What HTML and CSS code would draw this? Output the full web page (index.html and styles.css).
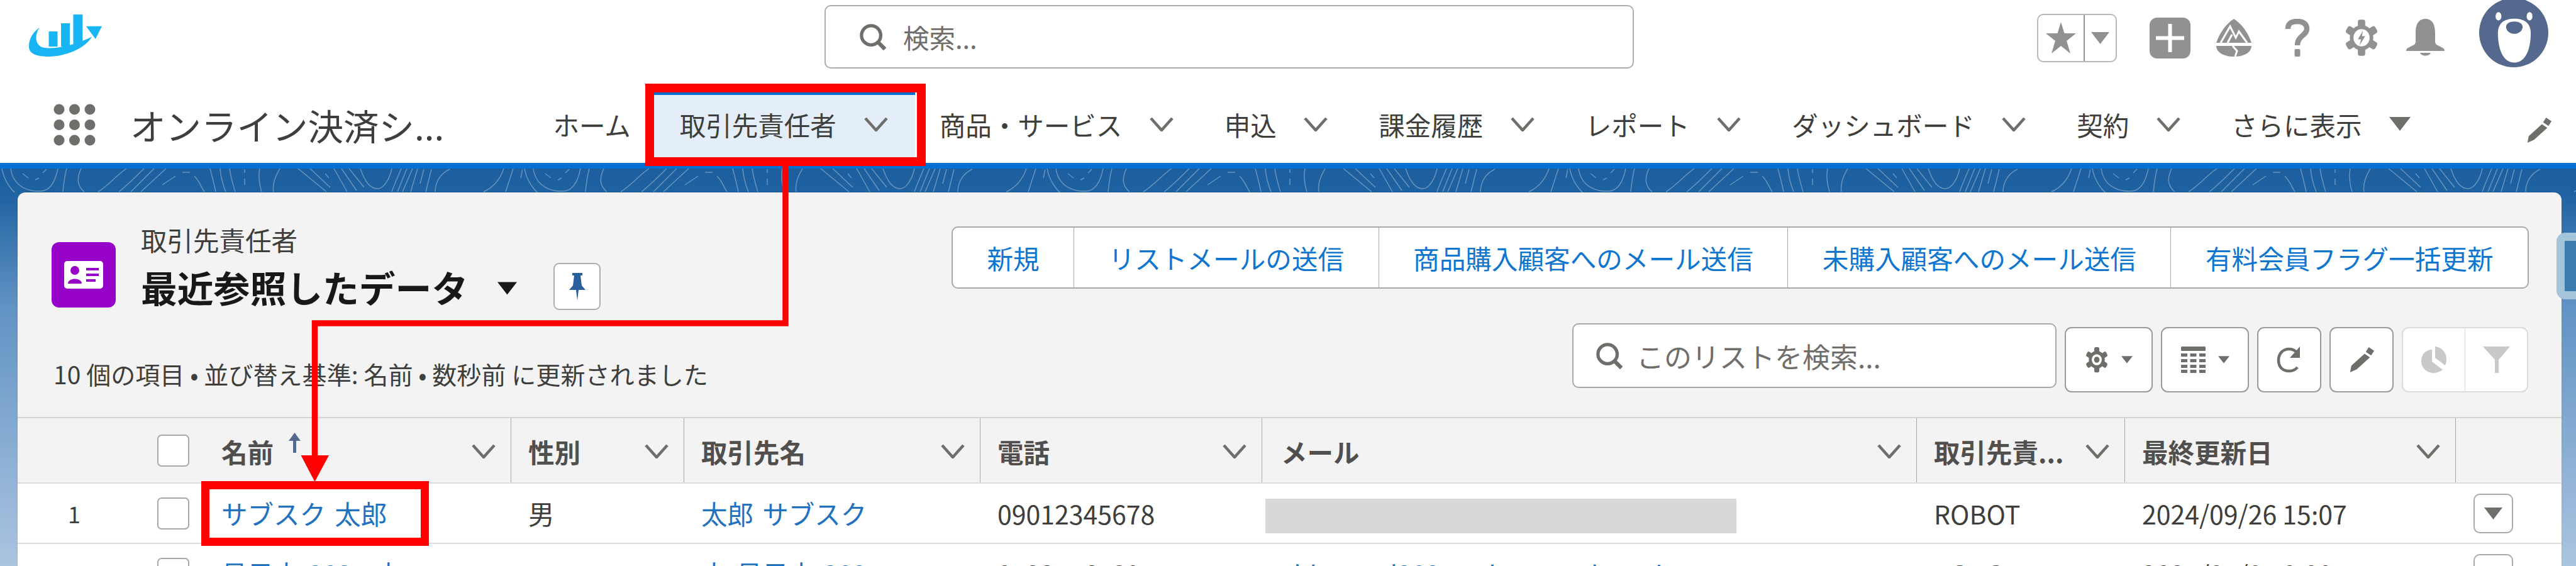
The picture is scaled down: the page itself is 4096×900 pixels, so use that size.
FILE: index.html
```html
<!DOCTYPE html>
<html lang="ja">
<head>
    <meta charset="UTF-8">
    <title>取引先責任者 | Salesforce</title>
    <link rel="stylesheet" href="styles.css">
</head>
<body>
    <!-- Shared icons -->
    <svg class="icon-defs" width="0" height="0">
        <symbol id="chev" viewBox="0 0 38 22"><path d="M2 1 L19 20 L36 1" fill="none" stroke="currentColor" stroke-width="4.5"/></symbol>
        <symbol id="caret" viewBox="0 0 34 22"><path d="M0 0 H34 L17 22 Z" fill="currentColor"/></symbol>
        <symbol id="lens" viewBox="0 0 44 44"><circle cx="19" cy="19" r="16" fill="none" stroke="currentColor" stroke-width="5.5"/><path d="M30 30 L42 42" stroke="currentColor" stroke-width="6.5"/></symbol>
        <symbol id="gear-teeth" viewBox="0 0 48 48">
            <rect x="19" y="1" width="10" height="46" rx="3" fill="currentColor"/>
            <rect x="19" y="1" width="10" height="46" rx="3" fill="currentColor" transform="rotate(60 24 24)"/>
            <rect x="19" y="1" width="10" height="46" rx="3" fill="currentColor" transform="rotate(120 24 24)"/>
            <circle cx="24" cy="24" r="16" fill="currentColor"/>
        </symbol>
    </svg>

    <div class="page">
        <header class="topbar">
            <svg class="logo" viewBox="0 0 125 72">
                <rect x="76" y="0" width="16" height="55" fill="#17b5f4"/>
                <rect x="55" y="15" width="15" height="40" fill="#17b5f4"/>
                <rect x="34" y="29" width="15" height="26" fill="#17b5f4"/>
                <path d="M98 20 H125 L114 42 Z" fill="#17b5f4"/>
                <path d="M0 55 C0 40 8 30 18 22 C10 35 10 50 22 56 C45 62 85 50 108 38 C95 60 60 72 35 72 C15 72 0 68 0 55 Z" fill="#17b5f4"/>
            </svg>
            <div class="global-search">
                <svg class="lens"><use href="#lens"/></svg>
                <span class="placeholder">検索...</span>
            </div>
            <div class="top-icons">
                <div class="fav-btn">
                    <span class="fav-part fav-star">
                        <svg width="48" height="50" viewBox="0 0 48 50"><path d="M24 0 L29.5 18 H48 L33 30 L39 50 L24 38 L9 50 L15 30 L0 18 H18.5 Z" fill="#919191"/></svg>
                    </span>
                    <span class="fav-part">
                        <svg class="caret-fav"><use href="#caret"/></svg>
                    </span>
                </div>
                <span class="top-icon">
                    <svg width="65" height="65" viewBox="0 0 65 65"><rect width="65" height="65" rx="12" fill="#919191"/><path d="M32.5 10 V55 M10 32.5 H55" stroke="#fff" stroke-width="6"/></svg>
                </span>
                <span class="top-icon">
                    <svg width="60" height="60" viewBox="0 0 60 60">
                        <path d="M30 0 C40 6 52 20 58 38 H2 C8 20 20 6 30 0 Z" fill="#919191"/>
                        <path d="M9 38 L24 12 L33 30 L38 20 L51 38 M20 38 L27 25" fill="none" stroke="#fff" stroke-width="3"/>
                        <path d="M2 43 H58 C58 52 48 60 30 60 C12 60 2 52 2 43 Z" fill="#919191"/>
                        <path d="M28 43 L35 51 L32 60" fill="none" stroke="#fff" stroke-width="3"/>
                    </svg>
                </span>
                <span class="top-icon">
                    <svg width="40" height="60" viewBox="0 0 40 60"><path d="M5 16 C5 7 11 4 20 4 C29 4 35 8 35 16 C35 26 20 27 20 42" fill="none" stroke="#919191" stroke-width="8.5"/><rect x="15.5" y="48" width="9" height="12" rx="2" fill="#919191"/></svg>
                </span>
                <span class="top-icon">
                    <svg width="56" height="60" viewBox="0 0 48 48" preserveAspectRatio="none">
                        <use href="#gear-teeth" color="#919191"/>
                        <circle cx="24" cy="24" r="11" fill="#fff"/>
                        <path d="M26 15 L19 26 H23.5 L21 34 L29 22 H24.5 Z" fill="#919191"/>
                    </svg>
                </span>
                <span class="top-icon">
                    <svg width="61" height="60" viewBox="0 0 61 60"><path d="M30.5 0 C42 0 46 10 46 22 V36 C46 41 50 42 54 44 C58 46 61 47 61 51 H0 C0 47 3 46 7 44 C11 42 15 41 15 36 V22 C15 10 19 0 30.5 0 Z" fill="#919191"/><path d="M22 54 H39 C37 60 24 60 22 54 Z" fill="#919191"/></svg>
                </span>
                <svg class="avatar" viewBox="0 0 118 118">
                    <circle cx="59" cy="59" r="59" fill="#54698d"/>
                    <ellipse cx="33" cy="31" rx="5" ry="7" fill="#fff"/>
                    <ellipse cx="86" cy="31" rx="5" ry="7" fill="#fff"/>
                    <path d="M60 35 C78 35 88 43 88 60 C88 85 80 110 60 110 C40 110 32 85 32 60 C32 43 42 35 60 35 Z" fill="#fff"/>
                    <path d="M60 40 C50 40 45 45 46 51 C48 58 54 61 60 61 C66 61 72 58 74 51 C75 45 70 40 60 40 Z" fill="#54698d"/>
                </svg>
            </div>
        </header>

        <nav class="nav">
            <div class="app-block">
                <svg class="launcher" viewBox="0 0 67 67">
                    <circle cx="9" cy="9" r="8.5"/><circle cx="33.5" cy="9" r="8.5"/><circle cx="58" cy="9" r="8.5"/>
                    <circle cx="9" cy="33.5" r="8.5"/><circle cx="33.5" cy="33.5" r="8.5"/><circle cx="58" cy="33.5" r="8.5"/>
                    <circle cx="9" cy="58" r="8.5"/><circle cx="33.5" cy="58" r="8.5"/><circle cx="58" cy="58" r="8.5"/>
                </svg>
                <span class="app-name">オンライン決済シ...</span>
            </div>
            <a class="nav-item nav-home">ホーム</a>
            <a class="nav-item nav-active">取引先責任者<svg class="nav-chev"><use href="#chev"/></svg></a>
            <a class="nav-item">商品・サービス<svg class="nav-chev"><use href="#chev"/></svg></a>
            <a class="nav-item">申込<svg class="nav-chev"><use href="#chev"/></svg></a>
            <a class="nav-item">課金履歴<svg class="nav-chev"><use href="#chev"/></svg></a>
            <a class="nav-item">レポート<svg class="nav-chev"><use href="#chev"/></svg></a>
            <a class="nav-item">ダッシュボード<svg class="nav-chev"><use href="#chev"/></svg></a>
            <a class="nav-item">契約<svg class="nav-chev"><use href="#chev"/></svg></a>
            <a class="nav-item">さらに表示<svg class="nav-more"><use href="#caret"/></svg></a>
            <svg class="nav-edit" viewBox="0 0 44 44"><path d="M34 1 L43 7 L38 15 L29 9 Z M27 12 L36 18 L14 38 L3 43 L5 32 Z" fill="#706e6b"/></svg>
        </nav>

        <main class="main">
            <!-- Contour lines behind the card -->
            <svg class="band" width="4096" height="38">
                <defs>
                    <pattern id="contour" width="831" height="38" patternUnits="userSpaceOnUse">
                        <path fill="none" stroke="#fff" stroke-opacity="0.32" stroke-width="1.5" d="M3 0 C6 18 18 36 30 43 M17 0 C21 30 47 37 65 36 C83 35 89 15 92 0 M36 8 L45 15 M56 18 L62 15 M74 1 L68 7 M106 0 C102 15 101 27 100 37 M129 0 C122 15 122 27 134 37 M201 0 C184 12 172 27 156 37 M229 0 C214 15 202 27 189 37 M245 0 L208 37 M264 0 L224 37 M279 12 L258 26 M290 6 L302 6 M309 12 C318 21 320 30 325 37 M334 0 C338 15 341 27 343 37 M350 0 C351 15 355 27 359 37 M365 0 C367 15 371 27 374 37 M389 1 L389 7 M389 16 L389 26 M413 0 C410 15 413 27 416 37 M445 0 C436 15 433 27 435 37 M474 0 L519 37 M493 0 L525 30 M517 8 L523 15 M531 0 L552 37 M543 0 L567 35 M555 0 L579 30 M573 0 C579 18 588 32 600 32 C611 32 620 15 623 0 M638 0 C632 15 626 27 623 37 M647 0 L632 37 M656 0 L640 37 M664 0 L653 37 M674 1 L668 24 M686 1 L677 37 M715 1 C698 9 692 24 692 37 M801 0 C795 18 784 30 769 37 M816 0 L804 37 M831 1 L828 15"/>
                    </pattern>
                </defs>
                <rect width="4096" height="38" fill="url(#contour)"/>
            </svg>
            <div class="side-tab"></div>

            <section class="card">
                <div class="list-head">
                    <div class="list-title">
                        <svg class="obj-icon" viewBox="0 0 102 104">
                            <rect width="102" height="104" rx="12" fill="#9602c7"/>
                            <rect x="20" y="30" width="62" height="44" rx="5" fill="#fff"/>
                            <circle cx="37" cy="45" r="7" fill="#9602c7"/>
                            <path d="M26 66 C26 56 48 56 48 66 Z" fill="#9602c7"/>
                            <path d="M55 43 H75 M55 52 H75 M55 61 H70" stroke="#9602c7" stroke-width="4"/>
                        </svg>
                        <div>
                            <div class="obj-label">取引先責任者</div>
                            <div class="view-name">
                                <span>最近参照したデータ</span>
                                <svg class="view-caret"><use href="#caret"/></svg>
                                <span class="pin-btn">
                                    <svg width="26" height="44" viewBox="0 0 26 44"><path d="M5 0 H21 V4 H18 L20 20 L26 27 H15 L13 44 L11 27 H0 L6 20 L8 4 H5 Z" fill="#2a5f9e"/></svg>
                                </span>
                            </div>
                        </div>
                    </div>
                    <div class="actions">
                        <a class="action">新規</a>
                        <a class="action">リストメールの送信</a>
                        <a class="action">商品購入顧客へのメール送信</a>
                        <a class="action">未購入顧客へのメール送信</a>
                        <a class="action">有料会員フラグ一括更新</a>
                    </div>
                </div>

                <div class="list-bar">
                    <div class="list-meta">10 個の項目 • 並び替え基準: 名前 • 数秒前 に更新されました</div>
                    <div class="tools">
                        <div class="list-search">
                            <svg class="lens"><use href="#lens"/></svg>
                            <span class="placeholder">このリストを検索...</span>
                        </div>
                        <span class="tool-btn tool-wide">
                            <svg width="38" height="42" viewBox="0 0 48 48" preserveAspectRatio="none">
                                <use href="#gear-teeth" color="#706e6b"/>
                                <circle cx="24" cy="24" r="10" fill="#fff"/>
                                <circle cx="24" cy="24" r="5.5" fill="#706e6b"/>
                            </svg>
                            <svg class="tool-caret"><use href="#caret"/></svg>
                        </span>
                        <span class="tool-btn tool-wide">
                            <svg width="39" height="42" viewBox="0 0 39 42" fill="#706e6b">
                                <rect width="39" height="7" rx="1.5"/>
                                <rect y="11" width="10" height="5"/><rect x="14.5" y="11" width="10" height="5"/><rect x="29" y="11" width="10" height="5"/>
                                <rect y="20" width="10" height="5"/><rect x="14.5" y="20" width="10" height="5"/><rect x="29" y="20" width="10" height="5"/>
                                <rect y="29" width="10" height="5"/><rect x="14.5" y="29" width="10" height="5"/><rect x="29" y="29" width="10" height="5"/>
                                <rect y="37" width="10" height="5"/><rect x="14.5" y="37" width="10" height="5"/><rect x="29" y="37" width="10" height="5"/>
                            </svg>
                            <svg class="tool-caret"><use href="#caret"/></svg>
                        </span>
                        <span class="tool-btn">
                            <svg width="40" height="42" viewBox="0 0 40 42"><path d="M34 12 C30 6 26 4 20 4 C10 4 3 11 3 22 C3 33 10 39 20 39 C26 39 30 37 33 33" fill="none" stroke="#706e6b" stroke-width="4.5"/><path d="M37 0 V18 H21 Z" fill="#706e6b"/></svg>
                        </span>
                        <span class="tool-btn">
                            <svg width="44" height="42" viewBox="0 0 44 44"><path d="M34 1 L43 7 L38 15 L29 9 Z M27 12 L36 18 L14 38 L3 43 L5 32 Z" fill="#706e6b"/></svg>
                        </span>
                        <div class="tool-group">
                            <span class="tool-part tool-part-first">
                                <svg width="40" height="42" viewBox="0 0 40 42"><path d="M17 5 V24 L34 37 C30 40 24 42 19 42 C8 42 0 33 0 23 C0 13 7 5 17 5 Z" fill="#c9c9c9"/><path d="M22 0 C31 1 40 8 40 20 C40 24 39 27 38 30 L22 18 Z" fill="#c9c9c9"/></svg>
                            </span>
                            <span class="tool-part">
                                <svg width="43" height="42" viewBox="0 0 43 42"><path d="M0 0 H43 L25 21 V42 H19 V21 Z" fill="#c9c9c9"/></svg>
                            </span>
                        </div>
                    </div>
                </div>

                <div class="tbl-row tbl-head">
                    <div class="th-plain"></div>
                    <div class="th-plain"><span class="checkbox"></span></div>
                    <div class="th"><span class="th-name">名前<svg class="sort-arrow" width="25" height="32" viewBox="0 0 25 32"><path d="M12.5 0 L22 13 H15 V32 H10 V13 H3 Z" fill="#54698d"/></svg></span><svg class="th-chev"><use href="#chev"/></svg></div>
                    <div class="th">性別<svg class="th-chev"><use href="#chev"/></svg></div>
                    <div class="th">取引先名<svg class="th-chev"><use href="#chev"/></svg></div>
                    <div class="th">電話<svg class="th-chev"><use href="#chev"/></svg></div>
                    <div class="th th-mail">メール<svg class="th-chev"><use href="#chev"/></svg></div>
                    <div class="th">取引先責...<svg class="th-chev"><use href="#chev"/></svg></div>
                    <div class="th">最終更新日<svg class="th-chev"><use href="#chev"/></svg></div>
                    <div class="th-plain"></div>
                </div>

                <div class="tbl-row tbl-data">
                    <div class="td-idx">1</div>
                    <div class="td-check"><span class="checkbox"></span></div>
                    <div class="td"><a class="link">サブスク 太郎</a></div>
                    <div class="td">男</div>
                    <div class="td"><a class="link">太郎 サブスク</a></div>
                    <div class="td td-num">09012345678</div>
                    <div class="td td-mail"><span class="masked"></span></div>
                    <div class="td td-num">ROBOT</div>
                    <div class="td td-num">2024/09/26 15:07</div>
                    <div class="td-act"><span class="row-btn"><svg class="row-caret"><use href="#caret"/></svg></span></div>
                </div>

                <div class="tbl-row tbl-data">
                    <div class="td-idx">2</div>
                    <div class="td-check"><span class="checkbox"></span></div>
                    <div class="td"><a class="link">見目太 2025 太</a></div>
                    <div class="td"></div>
                    <div class="td"><a class="link">太 見目太 2025</a></div>
                    <div class="td td-num">0123456789</div>
                    <div class="td td-num td-mail2"><a class="link">sbl.user.d2025@tk.example.co.jp</a></div>
                    <div class="td td-num">ROBOT</div>
                    <div class="td td-num">2025/01/01 0:00</div>
                    <div class="td-act"><span class="row-btn"><svg class="row-caret"><use href="#caret"/></svg></span></div>
                </div>
            </section>
        </main>

        <!-- Red callouts drawn on top of the screenshot -->
        <div class="callout callout-tab"></div>
        <div class="callout callout-name"></div>
        <svg class="callout-arrow" width="4096" height="900">
            <path d="M1249 263 V514 H500.5 V730" fill="none" stroke="#f00" stroke-width="9.5"/>
            <path d="M478.5 724 H523 L500.5 766 Z" fill="#f00"/>
        </svg>
    </div>
</body>
</html>
```

FILE: styles.css
```css
html, body {
    margin: 0;
    padding: 0;
    overflow: hidden;
}

body {
    font-family: "Noto Sans CJK JP", "Noto Sans", sans-serif;
    color: #3e3e3c;
    background: #fff;
}

a {
    text-decoration: none;
}

.icon-defs {
    position: absolute;
}

.page {
    position: relative;
    width: 4096px;
    height: 900px;
    overflow: hidden;
    display: flex;
    flex-direction: column;
}

.placeholder {
    color: #706e6b;
}

/* Top bar */
.topbar {
    flex: none;
    height: 121px;
    display: grid;
    grid-template-columns: 1311px 1287px 1fr;
    background: #fff;
}

.logo {
    width: 116px;
    height: 67px;
    margin: 23px 0 0 46px;
}

.global-search {
    height: 101px;
    margin-top: 8px;
    box-sizing: border-box;
    display: flex;
    align-items: center;
    gap: 27px;
    padding-left: 54px;
    background: #fff;
    border: 2px solid #b0adab;
    border-radius: 10px;
    font-size: 41.5px;
    line-height: 50px;
}

.lens {
    flex: none;
    width: 42px;
    height: 42px;
    color: #706e6b;
}

.top-icons {
    height: 120px;
    display: flex;
    align-items: center;
    justify-content: flex-end;
    padding-right: 44px;
}

.fav-btn {
    width: 127px;
    height: 77px;
    box-sizing: border-box;
    display: flex;
    border: 2px solid #b8b8b8;
    border-radius: 10px;
    margin-right: 34px;
}

.fav-part {
    flex: 1;
    display: flex;
    align-items: center;
    justify-content: center;
}

.fav-star {
    flex: none;
    width: 72px;
    border-right: 2px solid #919191;
}

.caret-fav {
    width: 29px;
    height: 19px;
    color: #919191;
}

.top-icon {
    width: 101.5px;
    display: flex;
    justify-content: center;
}

.avatar {
    width: 110px;
    height: 110px;
    margin: -16px 0 0 35px;
}

/* App nav */
.nav {
    flex: none;
    height: 147px;
    box-sizing: border-box;
    display: flex;
    padding: 26px 0 0 85px;
    background: #fff;
    border-bottom: 9px solid #0070d2;
    font-size: 41.5px;
    line-height: 50px;
    position: relative;
}

.app-block {
    flex: none;
    width: 752.5px;
    display: flex;
    align-items: center;
    gap: 55px;
    padding-bottom: 10px;
    box-sizing: border-box;
}

.launcher {
    width: 67px;
    height: 67px;
    fill: #706e6b;
}

.app-name {
    font-size: 56.5px;
    line-height: 60px;
    color: #3e3e3c;
    white-space: nowrap;
}

.nav-item {
    display: flex;
    align-items: center;
    gap: 43.5px;
    padding: 0 40.5px 10px;
    color: #3e3e3c;
    white-space: nowrap;
}

.nav-home {
    padding-left: 42px;
    padding-right: 35px;
}

.nav-active {
    padding-left: 43px;
    padding-right: 43px;
    gap: 44px;
    margin-right: -1.5px;
    background: #e4eef8;
    box-shadow: inset 0 4px 0 #0070d2;
}

.nav-chev {
    width: 38px;
    height: 22px;
    color: #706e6b;
}

.nav-more {
    width: 34px;
    height: 22px;
    color: #706e6b;
    margin-top: -2px;
}

.nav-edit {
    width: 42px;
    height: 42px;
    margin: 39px 38px 0 auto;
}

/* Page background and card */
.main {
    flex: 1;
    position: relative;
    padding: 38px 23px 0 28px;
    background: linear-gradient(180deg, #1c5e9e 0, #1f62a1 6%, #6193c4 35%, #abc4e0 100%);
    overflow: hidden;
}

.band {
    position: absolute;
    left: 0;
    top: 0;
}

.side-tab {
    position: absolute;
    left: 4065px;
    top: 102px;
    width: 60px;
    height: 106px;
    box-sizing: border-box;
    background: #3b7cac;
    border: 13px solid rgba(255, 255, 255, 0.55);
    border-radius: 14px;
    z-index: 1;
}

.card {
    position: relative;
    height: 600px;
    background: #f3f3f3;
    border-radius: 12px 12px 0 0;
    box-shadow: 0 0 2px rgba(0, 0, 0, 0.2);
}

.list-head {
    height: 208px;
    box-sizing: border-box;
    display: flex;
    justify-content: space-between;
    align-items: flex-start;
    padding: 54px 52px 0 54px;
}

.list-title {
    display: flex;
    gap: 40px;
    margin-top: -4px;
}

.obj-icon {
    flex: none;
    width: 102px;
    height: 104px;
    margin-top: 29px;
}

.obj-label {
    font-size: 41.5px;
    line-height: 50px;
    margin-bottom: 12px;
}

.view-name {
    display: flex;
    align-items: center;
    font-size: 57.8px;
    line-height: 70px;
    font-weight: 700;
    color: #181818;
    white-space: nowrap;
}

.view-caret {
    width: 31px;
    height: 21px;
    color: #181818;
    margin: 6px 58px 0 47px;
}

.pin-btn {
    width: 75px;
    height: 75px;
    box-sizing: border-box;
    display: flex;
    align-items: center;
    justify-content: center;
    background: #fff;
    border: 2px solid #b0adab;
    border-radius: 9px;
}

.actions {
    display: flex;
    height: 99px;
    box-sizing: border-box;
    background: #fff;
    border: 2px solid #a8a8a8;
    border-radius: 10px;
    font-size: 41.6px;
    line-height: 50px;
}

.action {
    display: flex;
    align-items: center;
    padding: 0 54.5px;
    color: #0f76d0;
    border-left: 1.5px solid #a8a8a8;
    white-space: nowrap;
}

.action:first-child {
    border-left: none;
}

.list-bar {
    height: 149px;
    box-sizing: border-box;
    display: flex;
    justify-content: space-between;
    align-items: flex-start;
    padding: 0 53px 0 57px;
}

.list-meta {
    font-size: 39.1px;
    line-height: 50px;
    margin-top: 55px;
    white-space: nowrap;
}

.tools {
    display: flex;
    align-items: flex-start;
    gap: 13px;
}

.list-search {
    width: 770px;
    height: 103px;
    box-sizing: border-box;
    display: flex;
    align-items: center;
    gap: 22px;
    padding-left: 36px;
    background: #fff;
    border: 2px solid #a8a8a8;
    border-radius: 10px;
    font-size: 44px;
    line-height: 50px;
}

.tool-btn {
    width: 102px;
    height: 104px;
    box-sizing: border-box;
    margin-top: 6px;
    display: flex;
    align-items: center;
    justify-content: center;
    background: #fff;
    border: 2px solid #9a9a9a;
    border-radius: 11px;
}

.tool-wide {
    width: 140px;
    gap: 20px;
}

.tool-caret {
    width: 18px;
    height: 14px;
    color: #706e6b;
}

.tool-group {
    width: 201px;
    height: 104px;
    box-sizing: border-box;
    margin-top: 6px;
    display: flex;
    background: #fff;
    border: 2px solid #dcdcdc;
    border-radius: 11px;
}

.tool-part {
    flex: 1;
    display: flex;
    align-items: center;
    justify-content: center;
}

.tool-part-first {
    flex: none;
    width: 98px;
    border-right: 1.5px solid #d8d8d8;
}

/* Table */
.tbl-row {
    display: grid;
    grid-template-columns: 190px 107px 488px 275px 471px 448px 1041px 331px 526px 168px;
    box-sizing: border-box;
    font-size: 41.5px;
    line-height: 50px;
}

.tbl-head {
    height: 106px;
    background: #f3f3f3;
    border-top: 2.5px solid #d4d4d4;
    border-bottom: 2.5px solid #dcdcdc;
}

.tbl-data {
    height: 96px;
    background: #fff;
    border-bottom: 2.5px solid #dcdcdc;
}

.th-plain {
    display: flex;
    align-items: center;
    padding-left: 31.5px;
}

.th {
    display: flex;
    align-items: center;
    justify-content: space-between;
    padding: 4px 24px 0 27px;
    border-right: 1.5px solid #a8a8a8;
    font-weight: 700;
    color: #514f4d;
    white-space: nowrap;
    min-width: 0;
}

.th-mail {
    padding-left: 30px;
}

.th-name {
    display: flex;
    align-items: center;
}

.sort-arrow {
    margin: -28px 0 0 21px;
}

.th-chev {
    flex: none;
    width: 38px;
    height: 22px;
    color: #706e6b;
}

.checkbox {
    display: block;
    width: 51px;
    height: 51px;
    box-sizing: border-box;
    background: #fff;
    border: 2px solid #a8a8a8;
    border-radius: 7px;
}

.td-idx {
    display: flex;
    align-items: center;
    padding-left: 80px;
    font-size: 36px;
}

.td-check {
    display: flex;
    align-items: center;
    padding-left: 31.5px;
}

.td {
    display: flex;
    align-items: center;
    padding-left: 27px;
    white-space: nowrap;
    overflow: hidden;
}

.td-num {
    font-size: 41px;
}

.td-mail {
    padding-left: 5px;
}

.td-mail2 {
    padding-left: 31px;
}

.masked {
    display: block;
    width: 749px;
    height: 55px;
    margin-top: 9px;
    background: #d8d8d8;
}

.link {
    color: #2272bf;
    word-spacing: 5px;
}

.td-act {
    display: flex;
    align-items: center;
    padding-left: 28px;
}

.row-btn {
    width: 63px;
    height: 63px;
    box-sizing: border-box;
    display: flex;
    align-items: center;
    justify-content: center;
    background: #fff;
    border: 2px solid #a8a8a8;
    border-radius: 10px;
}

.row-caret {
    width: 29px;
    height: 19px;
    color: #706e6b;
}

/* Callouts */
.callout {
    position: absolute;
    box-sizing: border-box;
    border: 14px solid #f00;
}

.callout-tab {
    left: 1026px;
    top: 133px;
    width: 446px;
    height: 131px;
}

.callout-name {
    left: 320px;
    top: 765px;
    width: 362px;
    height: 103px;
    border-width: 13px;
}

.callout-arrow {
    position: absolute;
    left: 0;
    top: 0;
}
```
